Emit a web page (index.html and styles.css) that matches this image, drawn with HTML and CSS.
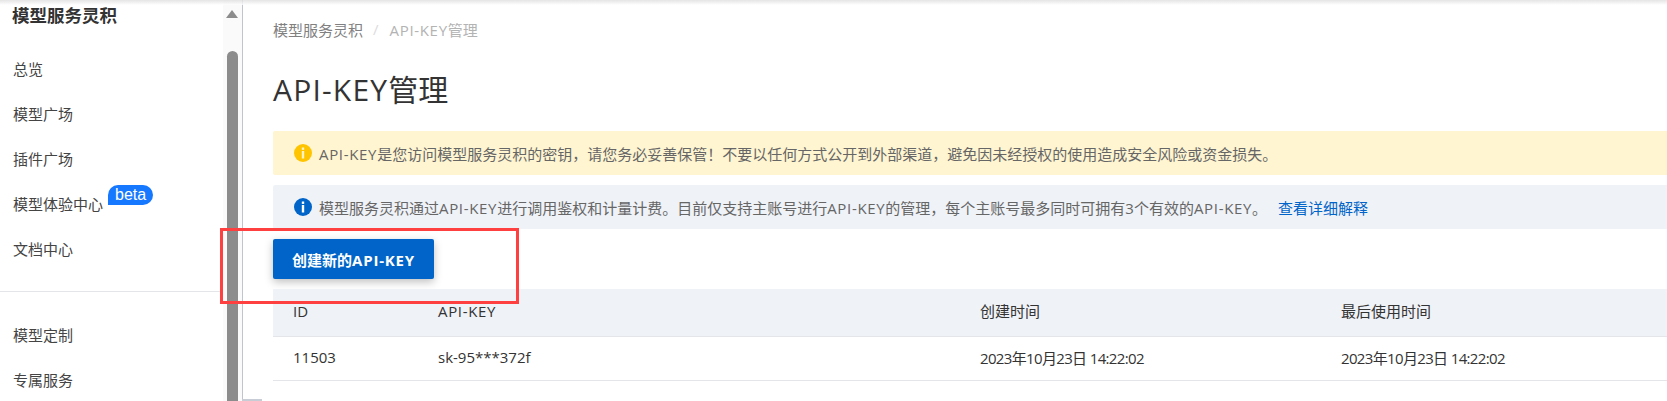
FILE: index.html
```html
<!DOCTYPE html>
<html lang="zh-CN">
<head>
    <meta charset="UTF-8">
    <meta name="viewport" content="width=device-width, initial-scale=1.0">
    <title>API-KEY管理</title>
    <link rel="stylesheet" href="styles.css">
</head>
<body>

    <div class="page">

        <aside class="sidebar">
            <h2 class="side-title">模型服务灵积</h2>
            <ul class="side-menu">
                <li>总览</li>
                <li>模型广场</li>
                <li>插件广场</li>
                <li>模型体验中心<span class="beta">beta</span></li>
                <li>文档中心</li>
            </ul>
            <hr class="side-line">
            <ul class="side-menu">
                <li>模型定制</li>
                <li>专属服务</li>
            </ul>
            <div class="scroll-track">
                <div class="scroll-arrow"></div>
                <div class="scroll-thumb"></div>
            </div>
        </aside>

        <main class="content">
            <div class="crumbs">
                <span>模型服务灵积</span>
                <span class="crumb-sep">/</span>
                <span class="crumb-now"><span class="en">API-KEY</span>管理</span>
            </div>

            <h1 class="page-title"><span class="en">API-KEY</span>管理</h1>

            <div class="alert alert-warn">
                <svg class="alert-icon" viewBox="0 0 18 18"><circle cx="9" cy="9" r="9" fill="#ffc400"/><rect x="7.8" y="3.5" width="2.4" height="2.4" fill="#fff3c4"/><rect x="7.8" y="7" width="2.4" height="7.5" fill="#fff3c4"/></svg>
                <span><span class="en">API-KEY</span>是您访问模型服务灵积的密钥，请您务必妥善保管！不要以任何方式公开到外部渠道，避免因未经授权的使用造成安全风险或资金损失。</span>
            </div>

            <div class="alert alert-info">
                <svg class="alert-icon" viewBox="0 0 18 18"><circle cx="9" cy="9" r="9" fill="#0064c8"/><rect x="7.8" y="3.5" width="2.4" height="2.4" fill="#fff"/><rect x="7.8" y="7" width="2.4" height="7.5" fill="#fff"/></svg>
                <span>模型服务灵积通过<span class="en">API-KEY</span>进行调用鉴权和计量计费。目前仅支持主账号进行<span class="en">API-KEY</span>的管理，每个主账号最多同时可拥有3个有效的<span class="en">API-KEY</span>。</span>
                <a class="alert-link" href="#">查看详细解释</a>
            </div>

            <button class="btn-primary" type="button">创建新的<span class="en">API-KEY</span></button>

            <table class="key-table">
                <colgroup>
                    <col class="col-id">
                    <col class="col-key">
                    <col class="col-created">
                    <col>
                </colgroup>
                <thead>
                    <tr>
                        <th>ID</th>
                        <th><span class="en">API-KEY</span></th>
                        <th>创建时间</th>
                        <th>最后使用时间</th>
                    </tr>
                </thead>
                <tbody>
                    <tr>
                        <td>11503</td>
                        <td>sk-95***372f</td>
                        <td class="time">2023年10月23日 14:22:02</td>
                        <td class="time">2023年10月23日 14:22:02</td>
                    </tr>
                </tbody>
            </table>
        </main>

    </div>

    <div class="top-shade"></div>
    <div class="corner-line"></div>
    <div class="red-box"></div>

</body>
</html>
```

FILE: styles.css
```css
*{
    box-sizing: border-box;
}

html, body{
    margin: 0;
    height: 401px;
    overflow: hidden;
    background: #fff;
}

body{
    font-family: "Open Sans", "Noto Sans CJK SC", sans-serif;
    font-size: 15px;
    color: #333;
}

.en{
    letter-spacing: 0.045em;
}

.page{
    display: flex;
    height: 401px;
}

/* sidebar */
.sidebar{
    position: relative;
    flex: 0 0 243px;
    border-right: 1px solid #bfc5cf;
    overflow: hidden;
}

.side-title{
    margin: 5px 0 0 12px;
    font-size: 17.5px;
    line-height: 20px;
    font-weight: 700;
    color: #333;
}

.side-menu{
    list-style: none;
    margin: 0;
    padding: 0 0 0 13px;
}

.sidebar .side-title + .side-menu{
    margin-top: 22px;
}

.side-menu li{
    height: 45px;
    line-height: 45px;
    color: #444;
}

.beta{
    display: inline-block;
    vertical-align: top;
    margin: 3px 0 0 5px;
    padding: 0 7px;
    height: 20px;
    line-height: 19px;
    font-family: "Liberation Sans", sans-serif;
    font-size: 16px;
    color: #fff;
    background: #1677ff;
    border-radius: 10px 10px 10px 0;
}

.side-line{
    width: 100%;
    margin: 19px 0 21px;
    border: none;
    border-top: 1px solid #e3e5e8;
}

.scroll-track{
    position: absolute;
    top: 0;
    bottom: 0;
    right: 0;
    width: 19px;
    background: #fafafa;
}

.scroll-arrow{
    position: absolute;
    top: 10px;
    left: 3px;
    border-left: 6px solid transparent;
    border-right: 6px solid transparent;
    border-bottom: 8px solid #8c8c8c;
}

.scroll-thumb{
    position: absolute;
    top: 51px;
    bottom: 0;
    left: 4px;
    width: 11px;
    background: #8c8c8c;
    border-radius: 6px 6px 0 0;
}

/* main area */
.content{
    flex: 1;
    min-width: 0;
    padding: 19px 0 0 30px;
}

.crumbs{
    display: flex;
    align-items: center;
    height: 20px;
    color: #808080;
}

.crumb-sep{
    margin: 0 11px 0 10px;
    color: #dcdcdc;
}

.crumb-now{
    color: #b3b3b3;
}

.page-title{
    margin: 31px 0 0;
    font-size: 30px;
    line-height: 40px;
    font-weight: 400;
    color: #333;
}

.page-title .en{
    letter-spacing: 0.04em;
}

.alert{
    display: flex;
    align-items: center;
    height: 44px;
    padding-left: 21px;
    border-radius: 2px 0 0 2px;
    color: #666;
}

.alert-warn{
    margin-top: 21px;
    background: #fff5d1;
}

.alert-info{
    margin-top: 10px;
    background: #eff2f7;
}

.alert-icon{
    flex: none;
    width: 18px;
    height: 18px;
    margin-right: 7px;
}

.alert-link{
    margin-left: 11px;
    color: #0064c8;
    text-decoration: none;
}

.btn-primary{
    display: block;
    width: 161px;
    height: 40px;
    margin-top: 10px;
    padding: 0;
    border: none;
    border-radius: 2px;
    font: inherit;
    font-weight: 700;
    color: #fff;
    background: #0064c8;
    box-shadow: 0 3px 8px rgba(0, 0, 0, 0.25);
}

.btn-primary .en{
    letter-spacing: 0.055em;
}

.key-table{
    width: 100%;
    margin-top: 10px;
    border-collapse: collapse;
    table-layout: fixed;
}

.col-id{
    width: 165px;
}

.col-key{
    width: 542px;
}

.col-created{
    width: 361px;
}

.key-table th{
    height: 47px;
    padding: 0 0 3px 20px;
    text-align: left;
    font-weight: 400;
    background: #eff2f7;
    border-bottom: 1px solid #e3e5e8;
}

.key-table td{
    height: 44px;
    padding: 0 0 2px 20px;
    border-bottom: 1px solid #e3e5e8;
}

.key-table .time{
    letter-spacing: -0.65px;
}

.key-table th + th,
.key-table td + td{
    padding-left: 0;
}

/* overlays */
.top-shade{
    position: absolute;
    top: 0;
    left: 0;
    right: 0;
    height: 5px;
    background: linear-gradient(#dedede, #fff);
    opacity: 0.8;
}

.corner-line{
    position: absolute;
    top: 399px;
    left: 242px;
    width: 20px;
    height: 2px;
    background: #c8ccd4;
}

.red-box{
    position: absolute;
    top: 228px;
    left: 220px;
    width: 299px;
    height: 76px;
    border: 3px solid #ff4040;
}
```
